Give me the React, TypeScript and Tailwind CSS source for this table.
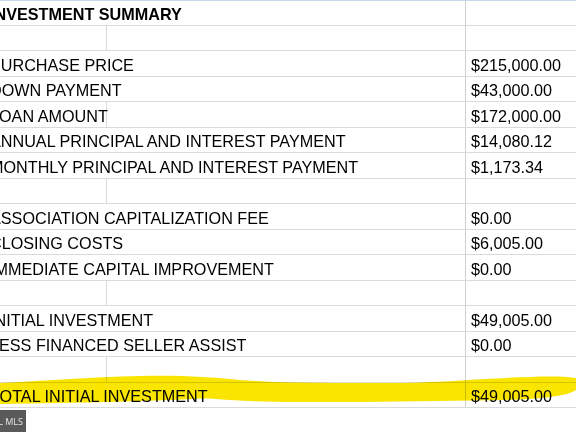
const rows: { label: string; value: string; split?: boolean; bold?: boolean }[] = [
  { label: 'INVESTMENT SUMMARY', value: '', bold: true },
  { label: '', value: '', split: true },
  { label: 'PURCHASE PRICE', value: '$215,000.00' },
  { label: 'DOWN PAYMENT', value: '$43,000.00' },
  { label: 'LOAN AMOUNT', value: '$172,000.00', split: true },
  { label: 'ANNUAL PRINCIPAL AND INTEREST PAYMENT', value: '$14,080.12' },
  { label: 'MONTHLY PRINCIPAL AND INTEREST PAYMENT', value: '$1,173.34' },
  { label: '', value: '', split: true },
  { label: 'ASSOCIATION CAPITALIZATION FEE', value: '$0.00' },
  { label: 'CLOSING COSTS', value: '$6,005.00' },
  { label: 'IMMEDIATE CAPITAL IMPROVEMENT', value: '$0.00' },
  { label: '', value: '', split: true },
  { label: 'INITIAL INVESTMENT', value: '$49,005.00' },
  { label: 'LESS FINANCED SELLER ASSIST', value: '$0.00' },
  { label: '', value: '', split: true },
  { label: 'TOTAL INITIAL INVESTMENT', value: '$49,005.00' },
];

const Highlight = () => (
  <svg
    className="absolute left-0 top-0 pointer-events-none mix-blend-multiply"
    width="576"
    height="432"
    viewBox="0 0 576 432"
  >
    <path
      d="M0 383 C 40 381, 90 377, 140 376 C 180 375, 210 377, 240 380 C 280 383, 340 383, 400 383 C 450 382, 490 378, 530 377 C 555 376, 570 377, 576 378 L 576 390 C 568 395, 555 397, 530 399 C 480 401, 420 401, 360 402 C 300 402, 260 402, 230 400 C 215 399, 205 398, 195 399 C 150 401, 80 403, 0 404 Z"
      fill="#f9e500"
    />
  </svg>
);

export default function App() {
  return (
    <div className="relative w-[576px] h-[432px] overflow-hidden bg-white font-['Liberation_Sans',Arial,sans-serif] text-[16.2px] leading-[16px] text-black">
      <div className="flex flex-col">
        {rows.map((r, i) => (
          <div
            key={i}
            className={`flex h-[25.5px] border-b border-[#dadada] ${i === 0 ? 'border-t border-t-[#c9d6ee]' : ''}`}
          >
            {r.split ? (
              <>
                <div className="w-[107px] border-r border-[#dadada] flex items-end pb-[3px] overflow-visible whitespace-nowrap">
                  <span className="-ml-[10px]">{r.label}</span>
                </div>
                <div className="w-[359px] border-r border-[#cfcfcf]" />
              </>
            ) : (
              <div className="w-[466px] border-r border-[#cfcfcf] flex items-end pb-[3px] overflow-visible whitespace-nowrap">
                <span className={`-ml-[10px] ${r.bold ? 'font-bold' : ''}`}>{r.label}</span>
              </div>
            )}
            <div className="flex-1 flex items-end pb-[3px] pl-[5px] whitespace-nowrap">{r.value}</div>
          </div>
        ))}
      </div>
      <div className="pt-[2px]">
        <div className="w-[26px] h-[22px] bg-[#5a5a5a] flex items-center justify-end pr-[3px] text-[9px] leading-[9px] text-[#e6e6e6] font-['Open_Sans',sans-serif] whitespace-nowrap overflow-hidden">
          L MLS
        </div>
      </div>
      <Highlight />
    </div>
  );
}
